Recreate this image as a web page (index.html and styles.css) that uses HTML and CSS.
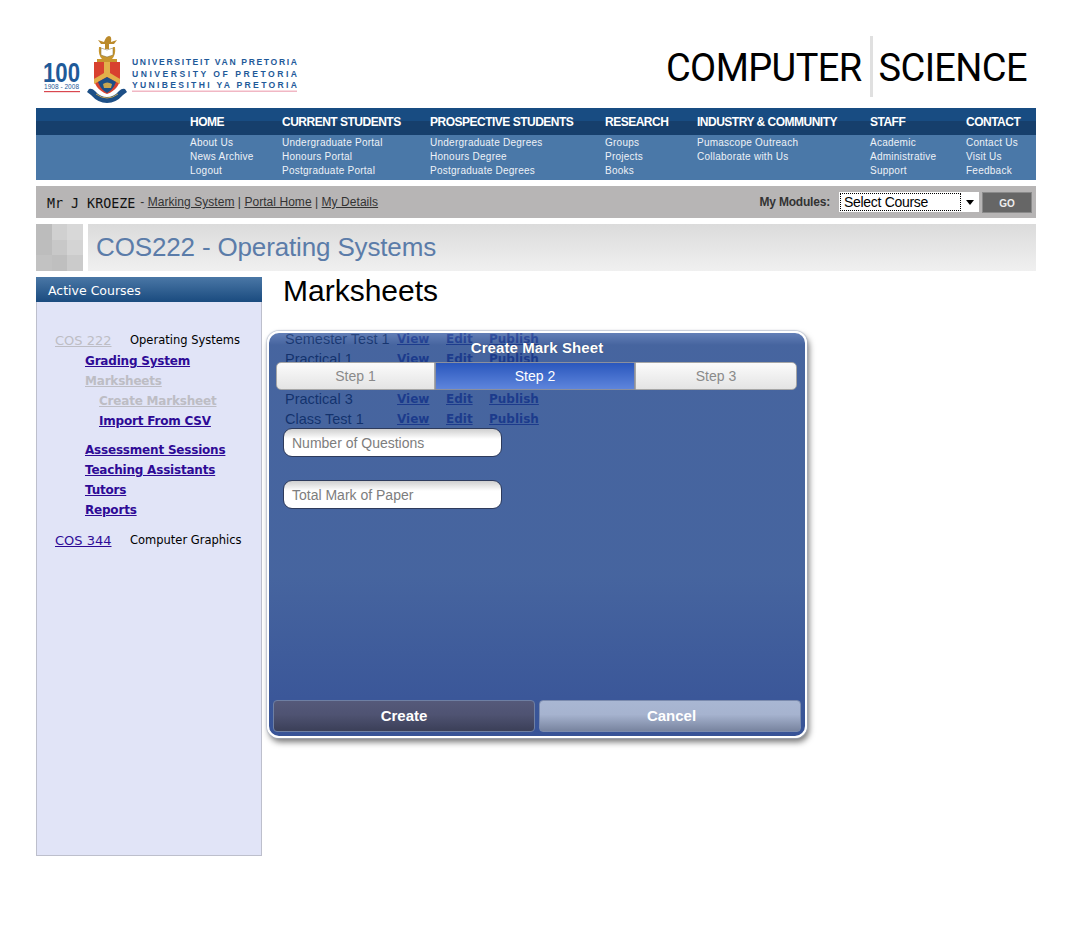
FILE: index.html
```html
<!DOCTYPE html>
<html lang="en">
<head>
<meta charset="utf-8">
<title>COS222 - Marksheets</title>
<link rel="stylesheet" href="styles.css">
</head>
<body>
<div class="page">
  <header class="masthead">
    <svg class="logo" width="270" height="72" viewBox="0 0 270 72" aria-label="University of Pretoria">
      <text class="logo-100" x="7" y="48" textLength="37" lengthAdjust="spacingAndGlyphs">100</text>
      <text class="logo-years" x="8" y="55" textLength="35">1908 - 2008</text>
      <rect x="8" y="57" width="36" height="1.2" fill="#d9474f"/>
      <!-- crest -->
      <path d="M58 28 h26 v15 q0 12 -13 17 q-13 -5 -13 -17z" fill="#d8412f"/>
      <path d="M68 28 h6 v11 l10 6 v5 l-13 -7 l-13 7 v-5 l10 -6z" fill="#e2b04a"/>
      <path d="M62 48 l9 -5 l9 5 q-3 8 -9 11 q-6 -3 -9 -11z" fill="#1d4f86"/>
      <path d="M67 50 q4 -3 9 0 l-1 4 h-7z" fill="#c9a650"/>
      <path d="M53 55 q3 -1 6 2 q5 6 12 6 q7 0 12 -6 q3 -3 6 -2 l2 3 l-4 3 q-7 8 -16 8 q-9 0 -16 -8 l-4 -3z" fill="#1d4f86"/>
      <path d="M60 60 q11 8 22 0" fill="none" stroke="#c9a650" stroke-width="1"/>
      <path d="M63 13 q-1 8 3 12 h10 q4 -4 3 -12 l-2 0 q0 7 -3 9 h-6 q-3 -2 -3 -9z" fill="#c8962e"/>
      <path d="M65 14 l6 2 l6 -2 v7 l-6 2 l-6 -2z" fill="#fff" stroke="#7b6a3a" stroke-width=".5"/>
      <path d="M62 6 l6 2 q2 -6 5 -6 q3 0 2 6 l6 -2 l-3 4 h-5 v5 h-4 v-5 h-4z" fill="#bb8a2b"/>
      <path d="M61 25 h20 v3 h-20z" fill="#c8962e"/>
      <text class="logo-name" x="96" y="31" textLength="165">UNIVERSITEIT VAN PRETORIA</text>
      <text class="logo-name" x="96" y="42.5" textLength="165">UNIVERSITY OF PRETORIA</text>
      <text class="logo-name" x="96" y="54" textLength="165">YUNIBESITHI YA PRETORIA</text>
      <rect x="96" y="56.5" width="165" height="1.5" fill="#f1b7c4"/>
    </svg>
    <div class="dept">
      <span class="dept-a">COMPUTER</span>
      <span class="dept-b">SCIENCE</span>
    </div>
  </header>

  <nav class="nav">
    <div class="nav-row nav-heads">
      <a class="c1">HOME</a><a class="c2">CURRENT STUDENTS</a><a class="c3">PROSPECTIVE STUDENTS</a><a class="c4">RESEARCH</a><a class="c5">INDUSTRY &amp; COMMUNITY</a><a class="c6">STAFF</a><a class="c7">CONTACT</a>
    </div>
    <div class="nav-row nav-links">
      <div class="c1"><a>About Us</a><a>News Archive</a><a>Logout</a></div>
      <div class="c2"><a>Undergraduate Portal</a><a>Honours Portal</a><a>Postgraduate Portal</a></div>
      <div class="c3"><a>Undergraduate Degrees</a><a>Honours Degree</a><a>Postgraduate Degrees</a></div>
      <div class="c4"><a>Groups</a><a>Projects</a><a>Books</a></div>
      <div class="c5"><a>Pumascope Outreach</a><a>Collaborate with Us</a></div>
      <div class="c6"><a>Academic</a><a>Administrative</a><a>Support</a></div>
      <div class="c7"><a>Contact Us</a><a>Visit Us</a><a>Feedback</a></div>
    </div>
  </nav>

  <div class="userbar">
    <div class="user">
      <span class="user-name">Mr J KROEZE</span>
      <span class="user-links">- <a>Marking System</a> | <a>Portal Home</a> | <a>My Details</a></span>
    </div>
    <div class="modules">
      <span class="modules-label">My Modules:</span>
      <div class="select"><span class="select-text">Select Course</span><span class="select-arrow"></span></div>
      <div class="go">GO</div>
    </div>
  </div>

  <div class="titlebar">
    <div class="mosaic">
      <i class="m1"></i><i class="m2"></i><i class="m3"></i>
      <i class="m4"></i><i class="m5"></i><i class="m6"></i>
      <i class="m7"></i><i class="m8"></i><i class="m9"></i>
    </div>
    <h2 class="course-title">COS222 - Operating Systems</h2>
  </div>

  <div class="columns">
    <aside class="sidebar">
      <div class="side-head">Active Courses</div>
      <div class="side-body">
        <div class="course"><a class="code off">COS 222</a><span class="cname">Operating Systems</span></div>
        <ul class="menu">
          <li><a>Grading System</a></li>
          <li><a class="off">Marksheets</a></li>
          <li class="sub"><a class="off">Create Marksheet</a></li>
          <li class="sub"><a>Import From CSV</a></li>
        </ul>
        <ul class="menu menu-b">
          <li><a>Assessment Sessions</a></li>
          <li><a>Teaching Assistants</a></li>
          <li><a>Tutors</a></li>
          <li><a>Reports</a></li>
        </ul>
        <div class="course course-b"><a class="code">COS 344</a><span class="cname">Computer Graphics</span></div>
      </div>
    </aside>

    <main class="main">
      <h1 class="page-title">Marksheets</h1>
      <div class="sheets">
        <span>Semester Test 1</span><a>View</a><a>Edit</a><a>Publish</a>
        <span>Practical 1</span><a>View</a><a>Edit</a><a>Publish</a>
        <span>Practical 2</span><a>View</a><a>Edit</a><a>Publish</a>
        <span>Practical 3</span><a>View</a><a>Edit</a><a>Publish</a>
        <span>Class Test 1</span><a>View</a><a>Edit</a><a>Publish</a>
      </div>

      <section class="modal">
        <div class="modal-title">Create Mark Sheet</div>
        <div class="steps">
          <div class="step step-1">Step 1</div>
          <div class="step step-2">Step 2</div>
          <div class="step step-3">Step 3</div>
        </div>
        <div class="fields">
          <div class="field">Number of Questions</div>
          <div class="field">Total Mark of Paper</div>
        </div>
        <div class="actions">
          <div class="btn btn-create">Create</div>
          <div class="btn btn-cancel">Cancel</div>
        </div>
      </section>
    </main>
  </div>
</div>
</body>
</html>
```

FILE: styles.css
```css
* { box-sizing: border-box; }
html, body { margin: 0; padding: 0; background: #fff; }
body { font-family: "Liberation Sans", Arial, sans-serif; height: 928px; overflow: hidden; }
a { color: inherit; }
.page { width: 1000px; margin-left: 36px; }

/* masthead */
.masthead { height: 108px; display: flex; justify-content: space-between; align-items: flex-start; padding-top: 36px; }
.logo { display: block; margin-top: -2px; }
.logo-100 { font: bold 28px "Liberation Sans", sans-serif; fill: #1f5a99; }
.logo-years { font: 6.5px "Liberation Sans", sans-serif; fill: #1f5a99; }
.logo-name { font: bold 8.6px "Liberation Sans", sans-serif; fill: #1f5a99; }
.dept { display: flex; height: 61px; align-items: flex-start; margin-right: 9px; color: #000; font-family: Roboto, sans-serif; font-size: 38px; font-weight: 400; line-height: 65px; letter-spacing: -.6px; }
.dept-a { padding-right: 8px; border-right: 3px solid #e0e0e0; height: 61px; }
.dept-b { padding-left: 6px; }

/* nav */
.nav { height: 72px; color: #fff; }
.nav-row { display: flex; padding-left: 154px; }
.c1 { width: 92px; }
.c2 { width: 148px; }
.c3 { width: 175px; }
.c4 { width: 92px; }
.c5 { width: 173px; }
.c6 { width: 96px; }
.c7 { width: 70px; }
.nav-heads { height: 27px; background: linear-gradient(#184c82 0, #184c82 50%, #163f6c 50%, #163f6c 100%); font-size: 12px; font-weight: bold; line-height: 28px; letter-spacing: -.5px; }
.nav-links { height: 45px; background: #4a78a8; font-size: 10px; line-height: 14px; padding-top: 1px; color: #eef2f7; letter-spacing: .25px; }
.nav-links a { display: block; }

/* user bar */
.userbar { height: 32px; margin-top: 6px; background: #b7b5b5; display: flex; justify-content: space-between; align-items: center; padding: 0 4px 0 11px; }
.user { display: flex; align-items: center; gap: 5px; }
.user-name { font: 13.33px "DejaVu Sans Mono", monospace; color: #111; position: relative; top: 1px; }
.user-links { font-size: 12px; color: #333; letter-spacing: .05px; }
.user-links a { text-decoration: underline; }
.modules { display: flex; align-items: center; }
.modules-label { font-size: 12px; font-weight: bold; color: #333; margin-right: 9px; letter-spacing: -.2px; }
.select { width: 140px; height: 20px; background: #fff; position: relative; padding: 1px 18px 1px 1px; }
.select-text { display: block; height: 18px; border: 1px dotted #000; font-size: 14px; line-height: 16px; padding-left: 3px; color: #000; letter-spacing: -.3px; }
.select-arrow { position: absolute; right: 5px; top: 8px; border: 4px solid transparent; border-top: 5px solid #000; border-bottom: 0; }
.go { width: 50px; height: 21px; margin-left: 3px; background: #666; border: 1px solid #8a8a8a; color: #eee; font-size: 10px; font-weight: bold; text-align: center; line-height: 21px; }

/* title bar */
.titlebar { margin-top: 6px; height: 47px; display: flex; }
.mosaic { width: 47px; height: 47px; display: grid; grid-template-columns: repeat(3, 1fr); grid-template-rows: repeat(3, 1fr); flex: none; }
.m1 { background: #bcbcbc; } .m2 { background: #d0d0d0; } .m3 { background: #d8d8d8; }
.m4 { background: #bdbdbd; } .m5 { background: #c8c8c8; } .m6 { background: #d4d4d4; }
.m7 { background: #c2c2c2; } .m8 { background: #bfbfbf; } .m9 { background: #cbcbcb; }
.course-title { flex: 1; margin: 0 0 0 5px; padding-left: 8px; background: linear-gradient(#dbdbdb, #f0f0f0); font-size: 26px; font-weight: normal; line-height: 47px; color: #5b7ca9; letter-spacing: -.15px; }

/* columns */
.columns { display: flex; margin-top: 6px; }
.sidebar { width: 226px; height: 579px; flex: none; background: #e1e4f7; border: 1px solid #bdbfcc; border-top: 0; }
.side-head { height: 25px; margin: 0 -1px; padding-left: 12px; background: linear-gradient(#4a77a6, #1a4b7f); color: #fff; font: 12.5px/27px "DejaVu Sans", sans-serif; }
.side-body { padding: 29px 0 0 18px; font-family: "DejaVu Sans", sans-serif; font-size: 12px; font-weight: bold; letter-spacing: -.2px; }
.side-body a { color: #2e0a96; text-decoration: underline; }
.side-body a.off { color: #bdbdc4; }
.course { display: flex; align-items: baseline; line-height: 20px; letter-spacing: 0; }
.course .code { width: 75px; font-weight: normal; font-size: 13px; }
.course-b { margin-top: 11px; }
.cname { font-weight: normal; font-size: 11.5px; color: #000; position: relative; top: -1px; }
.menu { list-style: none; margin: 0; padding: 0 0 0 30px; line-height: 20px; }
.menu .sub { padding-left: 14px; }
.menu-b { padding-top: 9px; }

/* main */
.main { flex: 1; position: relative; padding-left: 21px; }
.page-title { margin: 0; font-size: 30px; font-weight: normal; line-height: 28px; color: #000; }
.sheets { display: grid; grid-template-columns: 112px 49px 43px auto; justify-content: start; margin: 24px 0 0 2px; font-size: 14.5px; line-height: 20px; color: #000; }
.sheets a { font: bold 12px/20px "DejaVu Sans", sans-serif; color: #2e2ea0; text-decoration: underline; }

.modal { position: absolute; left: 5px; top: 54px; width: 540px; height: 407px; border: 2px solid #fff; border-radius: 12px; background: linear-gradient(rgba(60,95,165,.8) 0, rgba(24,62,135,.8) 12px, rgba(24,62,135,.8) 60%, rgba(15,48,130,.83) 100%); box-shadow: 0 0 1px 1px rgba(170,180,200,.6), 2px 4px 6px rgba(0,0,0,.55); padding: 5px 7px 0 7px; display: flex; flex-direction: column; }
.modal-title { height: 24px; color: #fff; text-align: center; font-size: 15px; font-weight: bold; line-height: 20px; letter-spacing: .1px; text-shadow: 0 0 1px rgba(0,0,0,.4); }
.steps { display: flex; height: 28px; font-size: 14px; line-height: 26px; text-align: center; }
.step { border: 1px solid #a6a6a6; background: linear-gradient(#fbfbfb, #e4e4e4); color: #8a8a8a; }
.step-1 { width: 159px; border-radius: 5px 0 0 5px; }
.step-2 { width: 200px; background: linear-gradient(#2a57bd, #5e85dc); color: #fff; border-color: #8a8f9e; }
.step-3 { width: 162px; border-radius: 0 5px 5px 0; }
.fields { display: flex; flex-direction: column; gap: 23px; margin: 38px 0 0 7px; flex: 1; }
.field { width: 219px; height: 29px; border: 1px solid #2e3b5c; border-radius: 9px; background: linear-gradient(#cfcfcf 0, #fff 10px); color: #7d7d7d; font-size: 14px; line-height: 29px; padding-left: 8px; }
.actions { display: flex; gap: 4px; height: 32px; margin: 0 -3px 4px; }
.btn { flex: 1 1 0; border-radius: 4px; color: #fff; font-size: 15px; font-weight: bold; text-align: center; line-height: 30px; border: 1px solid #6e7fa3; }
.btn-create { background: linear-gradient(#55597a 0, #4f5372 45%, #3b3f58 100%); }
.btn-cancel { background: linear-gradient(#a9b7d3 0, #a6b3cf 45%, #78849f 100%); border-color: #7b8bae; text-indent: 3px; }
```
